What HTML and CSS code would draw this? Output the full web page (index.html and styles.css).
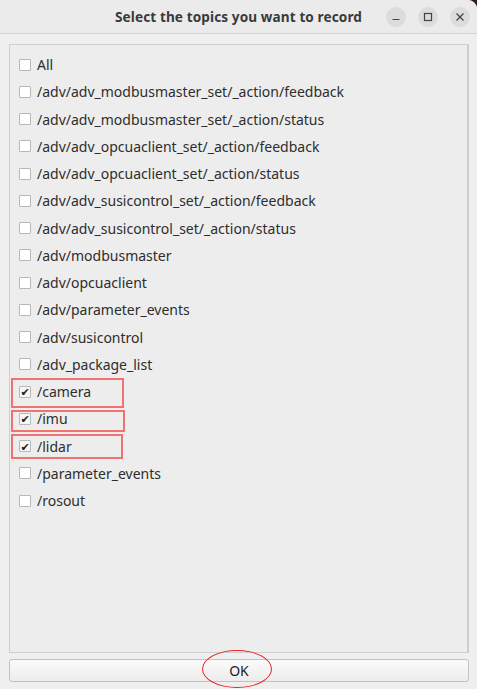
FILE: index.html
```html
<!DOCTYPE html>
<html lang="en">

<head>
  <meta charset="UTF-8">
  <title>Select the topics you want to record</title>
  <link rel="stylesheet" href="styles.css">
</head>

<body>
  <div class="window">
    <header class="titlebar">
      <span></span>
      <h1 class="title">Select the topics you want to record</h1>
      <div class="controls">
        <span class="ctl">
          <svg width="10" height="10" viewBox="0 0 10 10"><path d="M1.5 7.5h7" stroke="#444" stroke-width="1.2" fill="none"/></svg>
        </span>
        <span class="ctl">
          <svg width="10" height="10" viewBox="0 0 10 10"><rect x="1.5" y="1.5" width="7" height="7" stroke="#444" stroke-width="1.2" fill="none"/></svg>
        </span>
        <span class="ctl">
          <svg width="10" height="10" viewBox="0 0 10 10"><path d="M1.5 1.5l7 7M8.5 1.5l-7 7" stroke="#444" stroke-width="1.3" fill="none"/></svg>
        </span>
      </div>
    </header>

    <div class="content">
      <ul class="topics">
        <li class="topic"><span class="box"></span>All</li>
        <li class="topic"><span class="box"></span>/adv/adv_modbusmaster_set/_action/feedback</li>
        <li class="topic"><span class="box"></span>/adv/adv_modbusmaster_set/_action/status</li>
        <li class="topic"><span class="box"></span>/adv/adv_opcuaclient_set/_action/feedback</li>
        <li class="topic"><span class="box"></span>/adv/adv_opcuaclient_set/_action/status</li>
        <li class="topic"><span class="box"></span>/adv/adv_susicontrol_set/_action/feedback</li>
        <li class="topic"><span class="box"></span>/adv/adv_susicontrol_set/_action/status</li>
        <li class="topic"><span class="box"></span>/adv/modbusmaster</li>
        <li class="topic"><span class="box"></span>/adv/opcuaclient</li>
        <li class="topic"><span class="box"></span>/adv/parameter_events</li>
        <li class="topic"><span class="box"></span>/adv/susicontrol</li>
        <li class="topic"><span class="box"></span>/adv_package_list</li>
        <li class="topic">
          <span class="box checked">&#10004;</span>/camera
          <span class="mark mark-camera"></span>
        </li>
        <li class="topic">
          <span class="box checked">&#10004;</span>/imu
          <span class="mark mark-imu"></span>
        </li>
        <li class="topic">
          <span class="box checked">&#10004;</span>/lidar
          <span class="mark mark-lidar"></span>
        </li>
        <li class="topic"><span class="box"></span>/parameter_events</li>
        <li class="topic"><span class="box"></span>/rosout</li>
      </ul>

      <button class="btn-ok">
        OK
        <span class="ring"></span>
      </button>
    </div>
  </div>
</body>

</html>
```

FILE: styles.css
```css
:root {
  --bg: #efefef;
  --panel: #ededed;
  --line: #cfcfcf;
  --text: #2e2e2e;
  --red: #f07272;
  --font: "Noto Sans", "DejaVu Sans", sans-serif;
}

* {
  box-sizing: border-box;
}

html,
body {
  margin: 0;
  background: #2e1a28;
}

.window {
  width: 477px;
  height: 689px;
  background: var(--bg);
  border-top-right-radius: 9px;
  overflow: hidden;
  font-family: var(--font);
  color: var(--text);
}

.titlebar {
  height: 34px;
  display: grid;
  grid-template-columns: 1fr auto 1fr;
  align-items: center;
  background: #ebebeb;
  border-bottom: 1px solid #d4d4d4;
}

.title {
  margin: 0;
  font-size: 13.6px;
  font-weight: bold;
  color: #3a3a3a;
  letter-spacing: 0.1px;
}

.controls {
  display: flex;
  justify-content: flex-end;
  gap: 12px;
  padding-right: 7px;
}

.ctl {
  width: 20px;
  height: 20px;
  border-radius: 50%;
  background: #dcdcdc;
  display: flex;
  align-items: center;
  justify-content: center;
}

.content {
  padding: 10px 8px 7px 9px;
  display: flex;
  flex-direction: column;
  gap: 6px;
}

.topics {
  list-style: none;
  margin: 0;
  height: 609px;
  padding: 6px 0 0 9px;
  background: var(--panel);
  border: 1px solid var(--line);
  border-right-width: 2px;
}

.topic {
  position: relative;
  height: 27.25px;
  display: flex;
  align-items: center;
  gap: 6px;
  font-size: 14px;
}

.box {
  width: 12px;
  height: 12px;
  background: #fff;
  border: 1px solid #b8b8b8;
  border-radius: 1px;
  display: flex;
  align-items: center;
  justify-content: center;
  font-size: 11px;
  font-weight: bold;
  line-height: 1;
  color: #1e1e1e;
}

.box.checked {
  background: #f6f6f6;
}

/* red highlight frames round the picked topics */
.mark {
  position: absolute;
  left: -8px;
  border: 2px solid var(--red);
}

.mark-camera {
  top: 0;
  width: 113px;
  height: 30px;
}

.mark-imu {
  top: 5px;
  width: 114px;
  height: 22px;
}

.mark-lidar {
  top: 1px;
  width: 112px;
  height: 25px;
}

.btn-ok {
  position: relative;
  height: 23px;
  width: 100%;
  margin: 0;
  padding: 0;
  border: 1px solid #c2c2c2;
  border-radius: 3px;
  background: linear-gradient(#fbfbfb, #ececec);
  font-family: var(--font);
  font-size: 14px;
  color: #222;
}

.ring {
  position: absolute;
  left: 192px;
  top: -10px;
  width: 70px;
  height: 38px;
  border: 1px solid #e02424;
  border-radius: 50%;
}
```
